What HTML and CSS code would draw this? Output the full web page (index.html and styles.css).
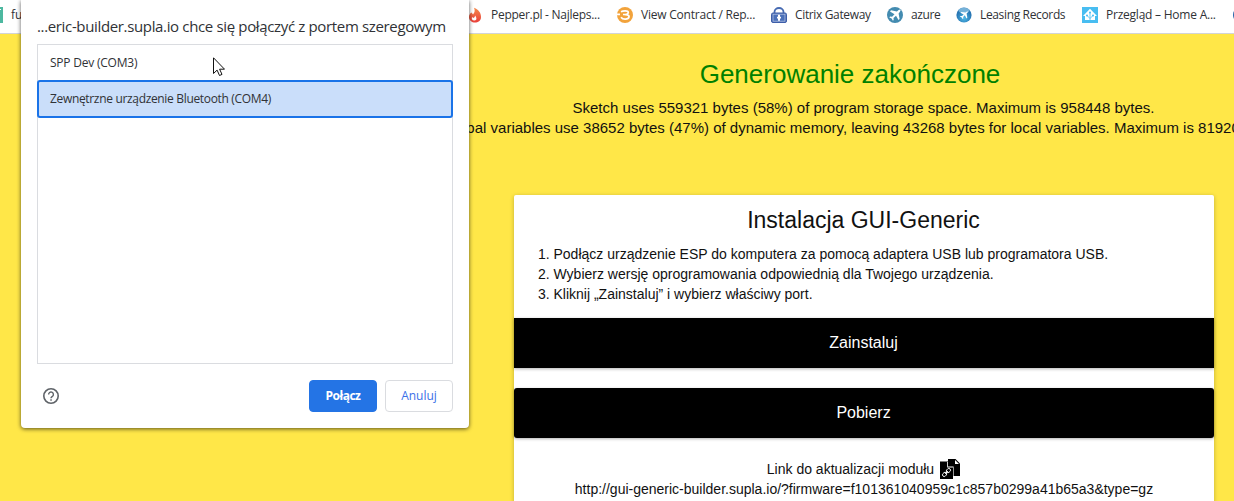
FILE: index.html
```html
<!DOCTYPE html>
<html lang="pl">
<head>
<meta charset="utf-8">
<title>GUI-Generic Builder</title>
<link rel="stylesheet" href="styles.css">
</head>
<body>
<nav class="bookmarks">
  <a class="bookmark first"><svg viewBox="0 0 16 16"><path fill="#4db8a0" d="M0 0h16v16H0z"/><path stroke="#fff" stroke-width="1" d="M2 2.500h12"/></svg><span>fu</span></a>
  <a class="bookmark pepper"><svg viewBox="0 0 16 16"><defs><linearGradient id="fire" x1="0" y1="0" x2="0" y2="1"><stop offset="0" stop-color="#f58a4b"/><stop offset="1" stop-color="#e93e3a"/></linearGradient></defs><path fill="url(#fire)" d="M7 .8C12 3 14 6 14 10c0 4-3 5.500-6 5.500S2 13.500 2 10c0-2 1-3.500 2.500-4.500l1.500 2C8 5.500 8 3 7 .8z"/><path fill="#fff" d="M8 8.500c2 2 2 5-.5 5S4.500 12 5 10l1.500 1C7.500 10.500 8 9.500 8 8.500z"/></svg><span>Pepper.pl - Najleps...</span></a>
  <a class="bookmark view"><svg viewBox="0 0 16 16"><circle cx="8" cy="8" r="8" fill="#f2a33c"/><path d="M4 4.700c2-1 7-1.500 7.300.7.200 2-3 2.100-5.300 2.100 3-.1 6.500.2 6 2.500-.6 2.700-6.200 3-8 .3M0 7.300h3" fill="none" stroke="#fff" stroke-width="1.700"/></svg><span>View Contract / Rep...</span></a>
  <a class="bookmark citrix"><svg viewBox="0 0 16 16"><path d="M3.500 7V5a4.500 4 0 0 1 9 0v2" fill="none" stroke="#466ab2" stroke-width="1.800"/><rect x=".5" y="6" width="15" height="9.500" rx="1.500" fill="#3d5ea9" stroke="#3d5ea9"/><rect x="2" y="7.200" width="12" height="7" fill="#4c71b9" stroke="#b4c4e4" stroke-width=".8"/><path d="M7 7.800h2v1.900h1v1.800H9v2.200H7v-2.200H6V9.700h1z" fill="#fff"/></svg><span>Citrix Gateway</span></a>
  <a class="bookmark azure"><svg viewBox="0 0 16 16"><circle cx="8" cy="8" r="8" fill="#438bb0"/><path fill="#fff" d="M13.500 2.600c-.8-.5-2 .2-3.600 2L4 3.300 3 4.400l4.500 2.800-2.400 2.600-2-.2-.8.8 2.300 1.200 1.300 2.200.8-.8-.2-2 2.500-2.300 2.500 4.400 1.100-1-1-5.700c1.600-1.600 2.300-3 1.900-3.800z"/></svg><span>azure</span></a>
  <a class="bookmark leasing"><svg viewBox="0 0 16 16"><defs><radialGradient id="ball" cy=".7"><stop offset="0" stop-color="#4eb8e5"/><stop offset="1" stop-color="#2876b4"/></radialGradient></defs><circle cx="8" cy="8" r="7.600" fill="url(#ball)"/><ellipse cx="8" cy="3.500" rx="5.500" ry="2.800" fill="#8fc5e4" opacity=".75"/><path fill="#fff" d="M12 4.600c-.7-.4-1.600.1-2.500 1L5.300 5l-.8.800 3.200 1.600L6 9.100l-1.500-.2-.6.700 1.800.8.900 1.700.7-.7-.1-1.500 1.600-1.600 1.700 3.200.8-.7-.7-4.200C11.600 5.700 12.300 5 12 4.600z"/></svg><span>Leasing Records</span></a>
  <a class="bookmark home"><svg viewBox="0 0 16 16"><path fill="#48bdf1" d="M0 0h16v16H0z"/><path fill="#fff" d="M8 1.800 15 9h-2v4H3V9H1l7-7.200z"/><path d="M8 13V5.500m0 6L4.700 8.200M8 11.500l3.300-3.300" fill="none" stroke="#48bdf1" stroke-width=".8"/><g fill="#48bdf1"><circle cx="8" cy="5.500" r="1"/><circle cx="5" cy="8.500" r="1"/><circle cx="11" cy="8.500" r="1"/></g></svg><span>Przegląd – Home A...</span></a>
  <a class="bookmark"><svg viewBox="0 0 16 16"><circle cx="8" cy="8" r="8" fill="#2563a8"/></svg></a>
</nav>
<main class="page">
  <h1 class="done">Generowanie zakończone</h1>
  <p class="usage"><span class="sketch">Sketch uses 559321 bytes (58%) of program storage space. Maximum is 958448 bytes.</span><span class="memory">Global variables use 38652 bytes (47%) of dynamic memory, leaving 43268 bytes for local variables. Maximum is 81920 bytes.</span></p>
  <section class="card">
    <h2 class="card-title">Instalacja GUI-Generic</h2>
    <ol class="steps">
      <li>Podłącz urządzenie ESP do komputera za pomocą adaptera USB lub programatora USB.</li>
      <li>Wybierz wersję oprogramowania odpowiednią dla Twojego urządzenia.</li>
      <li>Kliknij „Zainstaluj” i wybierz właściwy port.</li>
    </ol>
    <button class="action">Zainstaluj</button>
    <button class="action">Pobierz</button>
    <div class="update"><span>Link do aktualizacji modułu</span><svg class="copy" viewBox="0 0 20 20"><path d="M8 0h7.500L20 4.500V17H8z"/><path fill="#fff" d="M15 1v4h4z"/><path d="M0 2.500h8l5 5V20H0z"/><path fill="#fff" d="M8 3v4.500h5v1H7.200V3zM13 7.500h.6V17H13z"/><g transform="rotate(-45 6.500 13.500)" fill="none" stroke="#fff" stroke-width=".9"><rect x="1.500" y="11.800" width="4.600" height="3.400" rx="1.700"/><rect x="6.900" y="11.800" width="4.600" height="3.400" rx="1.700"/><path d="M4.500 13.500h4"/></g></svg></div>
    <div class="url">http://gui-generic-builder.supla.io/?firmware=f101361040959c1c857b0299a41b65a3&amp;type=gz</div>
  </section>
</main>
<div class="dialog" role="dialog">
  <h3 class="dialog-title">...eric-builder.supla.io chce się połączyć z portem szeregowym</h3>
  <div class="ports">
    <div class="port"><span class="com3">SPP Dev (COM3)</span></div>
    <div class="port selected"><span class="com4">Zewnętrzne urządzenie Bluetooth (COM4)</span></div>
  </div>
  <footer class="dialog-footer">
    <svg class="help" viewBox="0 0 16 16"><circle cx="8" cy="8" r="7.200" fill="none" stroke="#5f6368" stroke-width="1.600"/><path d="M5.600 6.500a2.400 2.400 0 1 1 4.200 1.500C9 8.800 8 9.100 8 10.300" fill="none" stroke="#5f6368" stroke-width="1.400"/><path fill="#5f6368" d="M7.300 11.300h1.500v1.500H7.300z"/></svg>
    <button class="btn primary">Połącz</button>
    <button class="btn">Anuluj</button>
  </footer>
</div>
<svg class="cursor" viewBox="0 0 12 19"><path d="M.5.800v15.700l3.600-3.400 2.400 5.400 2.500-1.100-2.400-5.200h4.900z" fill="#fff" stroke="#111" stroke-width="1"/></svg>
</body>
</html>
```

FILE: styles.css
```css
* { box-sizing: border-box; }
body { margin: 0; width: 1234px; height: 501px; overflow: hidden; position: relative; background: #ffe748; font-family: "Liberation Sans", Arial, sans-serif; color: #111; }
h1, h2, h3, p, ol { margin: 0; font-weight: 400; }
button { font: inherit; border: 0; padding: 0; }

.bookmarks { display: grid; grid-template-columns: 480px 150px 154px 116px 69px 126px 151px 16px; margin-left: -13px; width: 1262px; height: 34px; background: #fff; border-bottom: 1px solid #d2d4d6; font: 12px/18px "Open Sans", "Noto Sans", sans-serif; color: #303236; }
.bookmark { display: flex; align-items: center; gap: 8px; height: 30px; white-space: nowrap; }
.bookmark svg { width: 16px; height: 16px; flex: none; }
.pepper span { letter-spacing: -.28px; }
.view span { letter-spacing: -.22px; }
.citrix span { letter-spacing: -.35px; }
.azure span { letter-spacing: -.4px; }
.leasing span { letter-spacing: -.35px; }
.home span { letter-spacing: -.23px; }

.page { width: 700px; margin-left: 514px; text-align: center; }
.done { padding: 24px 28px 0 0; font-size: 26px; line-height: 32px; color: #008000; white-space: nowrap; }
.usage { display: flex; flex-direction: column; align-items: center; margin-top: 8px; padding-right: 1px; font-size: 15px; line-height: 20px; white-space: nowrap; }
.card { margin-top: 57px; height: 320px; background: #fff; border-radius: 2px; box-shadow: 0 1px 4px rgba(0, 0, 0, .25); }
.card-title { padding: 10px 1px 0 0; font-size: 23px; line-height: 30px; }
.steps { padding: 9px 0 0 39.500px; text-align: left; font-size: 14px; line-height: 20px; }
.action { display: block; width: 700px; height: 50px; margin-top: 14px; padding-right: 1px; background: #000; color: #fff; font-size: 16px; box-shadow: 0 1px 3px rgba(0, 0, 0, .3); }
.action + .action { margin-top: 20px; border-radius: 3px; }
.update { display: flex; justify-content: center; align-items: center; gap: 6px; height: 20px; margin-top: 21px; padding-right: 1px; font-size: 14px; }
.copy { width: 20px; height: 20px; }
.url { font-size: 14px; line-height: 20px; }

.dialog { position: absolute; left: 21px; top: 0; width: 448px; height: 428px; padding: 16px 16px 0; background: #fff; border-radius: 0 0 4px 4px; box-shadow: 0 1px 4px rgba(0, 0, 0, .65); font-family: "Open Sans", "Noto Sans", sans-serif; color: #303236; }
.dialog-title { font-size: 15px; line-height: 20px; letter-spacing: -.35px; white-space: nowrap; }
.ports { height: 320px; margin-top: 8px; border: 1px solid #dadce0; font-size: 12px; }
.port { display: flex; align-items: center; height: 36px; padding: 0 0 2px 12px; white-space: nowrap; letter-spacing: -.22px; }
.port.selected { height: 38px; margin: -1px 0 0 -1px; width: 416px; border: 2px solid #1a73e8; border-radius: 3px; background: #cadefa; padding-left: 11px; letter-spacing: -.33px; }
.dialog-footer { display: flex; align-items: center; gap: 8px; margin-top: 16px; }
.help { width: 16px; height: 16px; margin-left: 6px; margin-right: auto; }
.btn { width: 68px; height: 32px; padding-bottom: 1px; border: 1px solid #dadce0; border-radius: 4px; background: #fff; color: #3b70e8; font-size: 12px; }
.primary { background: #2474e5; border-color: #2474e5; color: #fff; font-weight: 700; letter-spacing: -.5px; }
.cursor { position: absolute; left: 213px; top: 57px; width: 12px; height: 19px; }
```
